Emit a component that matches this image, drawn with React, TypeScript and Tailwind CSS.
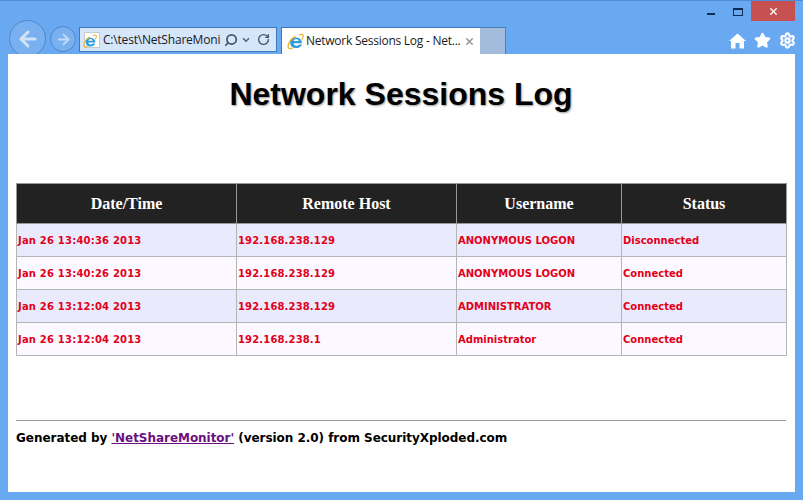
import { X, RotateCw, Search, ChevronDown, Star, Settings, ArrowLeft, ArrowRight } from "lucide-react";

const rows = [
  { date: "Jan 26 13:40:36 2013", host: "192.168.238.129", user: "ANONYMOUS LOGON", status: "Disconnected" },
  { date: "Jan 26 13:40:26 2013", host: "192.168.238.129", user: "ANONYMOUS LOGON", status: "Connected" },
  { date: "Jan 26 13:12:04 2013", host: "192.168.238.129", user: "ADMINISTRATOR", status: "Connected" },
  { date: "Jan 26 13:12:04 2013", host: "192.168.238.1", user: "Administrator", status: "Connected" },
];

// Internet Explorer logo
function IeLogo({ size }: { size: number }) {
  return (
    <svg width={size} height={size} viewBox="0 0 16 16" fill="none">
      <path d="M13 9.6 H6.2 C6.4 12.4 10 12.6 11.4 10.8 L14.2 10.8 C12.5 15.5 3 15.8 3 9 C3 3 13 2.5 14 8.5 L14 9.6 Z M6.2 7.6 H11 C10.6 5 6.6 5 6.2 7.6 Z" fill="#2f9bdc" fillRule="evenodd" />
      <path d="M11.5 2.2 C13.6 0.6 15.6 1 15.2 3.4 C15 4.6 14.5 5.4 13.9 6.2" stroke="#e8b32e" strokeWidth="1.2" />
      <path d="M8 3.2 C4.5 5 1.6 9 1 12 C0.6 14.8 2.6 15.4 5.4 14" stroke="#e8b32e" strokeWidth="1.2" />
    </svg>
  );
}

function HomeIcon() {
  return (
    <svg width="17" height="16" viewBox="0 0 17 16" fill="white">
      <path d="M8.5 0.5 L17 8 L15 8 L15 15.5 L10.5 15.5 L10.5 10 L6.5 10 L6.5 15.5 L2 15.5 L2 8 L0 8 Z" />
    </svg>
  );
}

export default function App() {
  return (
    <div className="w-[803px] h-[500px] overflow-hidden bg-[#69a9f1] border-t border-[#4f8cd3] flex flex-col font-['Liberation_Sans',sans-serif]">
      {/* Title bar */}
      <div className="h-[20px] pr-2 flex justify-end shrink-0">
        <div className="w-[8px] h-[2px] mt-[12px] mr-[18px] bg-[#0c2a52]" />
        <div className="w-[10px] h-[8px] mt-[7px] mr-[8px] border border-t-2 border-[#0c2a52]" />
        <div className="w-[44px] h-[20px] bg-[#c75050] flex items-center justify-center text-white">
          <X size={11} strokeWidth={3} />
        </div>
      </div>

      {/* Toolbar */}
      <div className="h-[33px] shrink-0 flex pl-[9px] pr-[7px]">
        <div className="w-[37px] h-[37px] -mt-[1px] shrink-0 rounded-full bg-[#78b0f0] border border-[#4f87c8] flex items-center justify-center text-[#d3e3f7]">
          <ArrowLeft size={24} strokeWidth={3} />
        </div>
        <div className="w-[26px] h-[26px] ml-[4px] mt-[5px] rounded-full bg-[#78b0f0] border border-[#4f87c8] flex items-center justify-center text-[#c5dcf6]">
          <ArrowRight size={17} strokeWidth={2.5} />
        </div>
        <div className="w-[198px] h-[25px] ml-[3px] mt-[6px] bg-[#d5e6fb] border border-[#3f78b8] flex items-center pl-[4px] pr-[5px]">
          <div className="relative w-[16px] h-[16px] bg-white border border-[#c9c9c9] shrink-0">
            <div className="absolute -left-[2px] top-[1px]">
              <IeLogo size={14} />
            </div>
          </div>
          <span className="ml-[3px] w-[117px] overflow-hidden whitespace-nowrap text-[12px] tracking-[-0.2px] text-[#1a1a1a] font-['Open_Sans',sans-serif]">C:\test\NetShareMoni</span>
          <Search size={14} strokeWidth={3} className="ml-[4px] text-[#44576e] -scale-x-100 shrink-0" />
          <ChevronDown size={10} strokeWidth={4} className="ml-[3px] text-[#55677c] shrink-0" />
          <RotateCw size={13} strokeWidth={2.5} className="ml-[6px] text-[#44576e] shrink-0" />
        </div>
        <div className="w-[199px] h-[27px] ml-[4px] mt-[6px] bg-white border-t border-l border-[#3f78b8] flex items-center pl-[5px]">
          <IeLogo size={17} />
          <span className="ml-[2px] w-[158px] whitespace-nowrap text-[12px] tracking-[-0.25px] text-[#1a1a1a] font-['Open_Sans',sans-serif]">Network Sessions Log - Net...</span>
          <X size={11} strokeWidth={3.5} className="text-[#9a9a9a] shrink-0" />
        </div>
        <div className="w-[26px] h-[27px] mt-[6px] bg-[#a3bcdc] border-t border-r border-[#4d80bb]" />
        <div className="flex-1 flex justify-end items-center gap-[8px] pt-[6px] text-white">
          <HomeIcon />
          <Star size={17} fill="white" />
          <Settings size={17} strokeWidth={3} />
        </div>
      </div>

      {/* Page */}
      <div className="w-[787px] h-[438px] ml-[8px] bg-white shrink-0 pl-[8px] pr-[9px]">
        <h1 className="mt-[21px] h-[39px] text-center text-[32px] leading-[39px] font-bold text-black [text-shadow:1px_1px_2px_#999] font-['Liberation_Sans',sans-serif]">
          Network Sessions Log
        </h1>
        <table className="mt-[69px] w-[770px] table-fixed border-collapse font-['DejaVu_Sans',sans-serif]">
          <colgroup>
            <col className="w-[220px]" />
            <col className="w-[220px]" />
            <col className="w-[165px]" />
            <col className="w-[165px]" />
          </colgroup>
          <thead>
            <tr className="h-[40px] bg-[#222222]">
              {["Date/Time", "Remote Host", "Username", "Status"].map((h) => (
                <th key={h} className="border border-[#999999] p-0 text-[16px] font-bold text-white text-center font-['Liberation_Serif',serif]">
                  {h}
                </th>
              ))}
            </tr>
          </thead>
          <tbody>
            {rows.map((r, i) => (
              <tr key={i} className={i % 2 === 0 ? "h-[33px] bg-[#e9eafc]" : "h-[33px] bg-[#fbf9ff]"}>
                <td className="border border-[#b5b5b5] p-0 pl-[1px] text-[10px] tracking-[0.2px] font-bold text-[#e2001a] whitespace-nowrap">{r.date}</td>
                <td className="border border-[#b5b5b5] p-0 pl-[1px] text-[10px] tracking-[0.15px] font-bold text-[#e2001a] whitespace-nowrap">{r.host}</td>
                <td className="border border-[#b5b5b5] p-0 pl-[1px] text-[10px] font-bold text-[#e2001a] whitespace-nowrap">{r.user}</td>
                <td className="border border-[#b5b5b5] p-0 pl-[1px] text-[10px] font-bold text-[#e2001a] whitespace-nowrap">{r.status}</td>
              </tr>
            ))}
          </tbody>
        </table>
        <hr className="mt-[64px] border-t border-[#999999]" />
        <p className="mt-[9px] text-[12px] tracking-[-0.04px] leading-[16px] font-bold text-black font-['DejaVu_Sans',sans-serif]">
          Generated by <a href="#" className="underline text-[#6a0f80]">'NetShareMonitor'</a> (version 2.0) from SecurityXploded.com
        </p>
      </div>
    </div>
  );
}
